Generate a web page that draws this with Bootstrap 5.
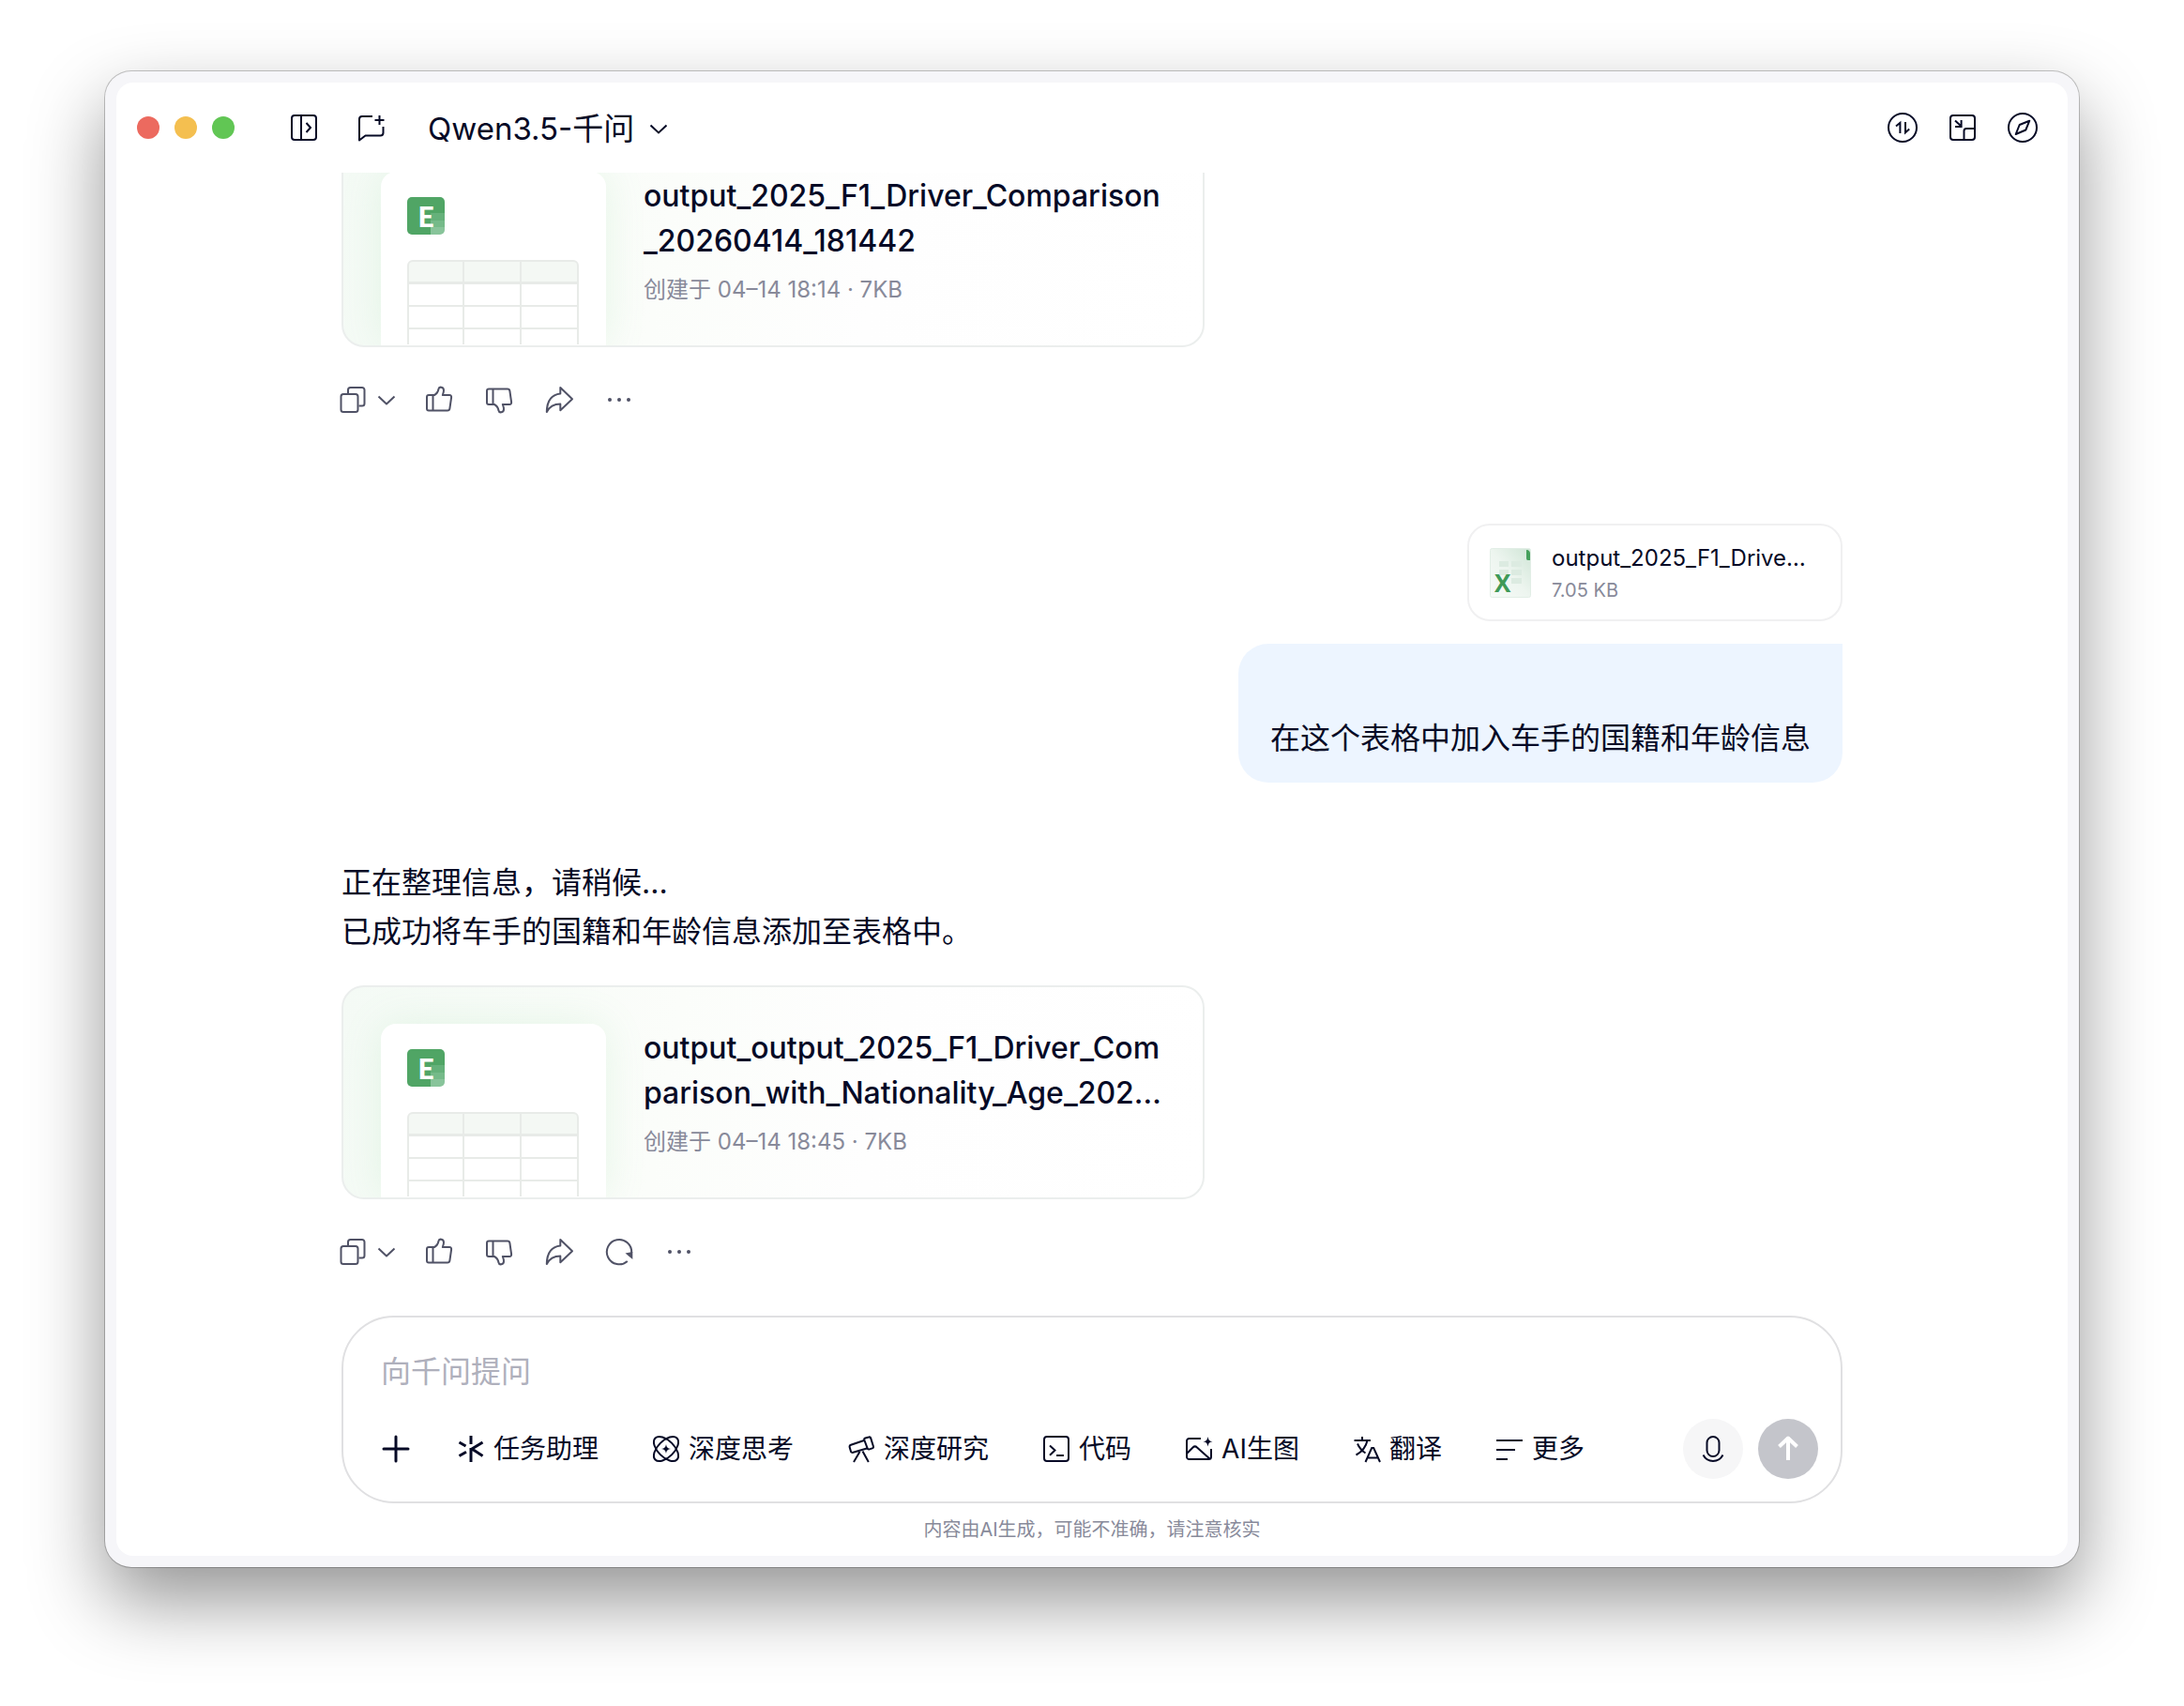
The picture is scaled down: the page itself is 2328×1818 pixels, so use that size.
<!DOCTYPE html>
<html lang="zh-CN">
<head>
<meta charset="utf-8">
<meta name="viewport" content="width=device-width, initial-scale=1">
<title>Qwen3.5-千问</title>
<link href="https://cdn.jsdelivr.net/npm/bootstrap@5.3.0/dist/css/bootstrap.min.css" rel="stylesheet">
<style>
:root{--ink:#060a26;--soft:#888a9a;--act:#505266}
body{font-family:Inter,"Noto Sans CJK SC",sans-serif;color:var(--ink);background:#fff;height:100vh;padding:76px 112px 148px;overflow:hidden}
svg{display:block;flex:none;fill:none;stroke:currentColor;stroke-width:2;overflow:visible}
.window{height:100%;padding:12px;background:#f6f6f9;border-radius:28px;box-shadow:0 0 0 1px rgba(0,0,0,.22),0 36px 80px rgba(0,0,0,.42)}
.pane{height:100%;background:#fff;border-radius:18px;overflow:hidden}
.topbar{height:96px;padding:0 32px 0 22px}
.light{width:24px;height:24px;border-radius:50%}
.light-close{background:#ec6a5f}
.light-min{background:#f4bf50}
.light-zoom{background:#61c654}
.icon-btn{background:none;border:0;padding:0;color:inherit;display:flex;align-items:center}
.nav-tools{gap:40px;margin:0 44px 0 58px}
.window-tools{gap:32px}
.model{font-size:33px;line-height:48px;padding-top:2px}
.column{width:100%;max-width:1600px;margin:0 auto}
.stream{min-height:0}
.filecard{width:920px;max-width:100%;height:228px;border:2px solid #ebeeed;border-radius:24px;overflow:hidden;background:linear-gradient(100deg,#f4faf5 0,#fbfdfa 38%,#fefefe 62%,#fff 100%)}
.sheet{width:240px;margin:39px 40px 0;padding:27px 0 0 28px;background:#fff;border-radius:16px 16px 0 0;box-shadow:0 0 44px rgba(110,205,125,.14)}
.elogo{width:40px;height:40px;border-radius:5px;background:#50a565 linear-gradient(#65b17a 0 33%,#75ba89 33% 66%,#88c49a 66%) right bottom/15px 23px no-repeat;color:#fff;font-family:Lato,sans-serif;font-size:30px;line-height:40px;font-weight:900;text-align:center}
.grid-art{margin:27px 0 0;stroke:#e8ebe8}
.ftitle{font-size:32px;line-height:48px;font-weight:500;padding-top:41px}
.fmeta{font-size:24px;line-height:40px;color:var(--soft);margin-top:8px}
.actions{color:var(--act);height:40px;margin:36px 0 0 -2px}
.actions svg{stroke-linejoin:round}
.copy-group{gap:12px;margin-right:32px}
.action-group{gap:36px}
.request{margin:112px 0 80px}
.attach{width:400px;height:104px;border:2px solid #f0f0f1;border-radius:24px;padding:2px 22px 0;gap:22px}
.aname{font-size:24px;line-height:36px}
.asize{font-size:20px;line-height:32px;color:var(--soft)}
.bubble{background:#edf5ff;border-radius:32px 0 32px 32px;padding:75px 34px 21px;margin-top:24px}
.say{font-size:32px;line-height:52px}
.reply{padding:1px 0 31px}
.composer{border:2px solid #e0e0e2;border-radius:56px;padding:34px 24px 24px 40px}
.ask{border:0;padding:0;height:48px;font-size:32px;line-height:48px;color:var(--ink);width:100%;display:block;background:none;outline:0}
.ask::placeholder{color:#afb0bc;opacity:1}
.tools{margin-top:26px;height:64px;padding-left:2px}
.plus{margin-right:52px}
.tool-list{gap:58px}
.tool{font-size:28px;line-height:40px;gap:10px;white-space:nowrap}
.bold-art{stroke-width:3}
.round{width:64px;height:64px;border-radius:50%;justify-content:center}
.mic{background:#f6f6f7}
.send{background:#c4c5cb}
.send svg{stroke-width:4}
.note{height:56px;line-height:56px;font-size:20px;color:var(--soft)}
</style>
<script src="https://cdn.jsdelivr.net/npm/bootstrap@5.3.0/dist/js/bootstrap.bundle.min.js"></script>
</head>
<body>
<svg width="0" height="0" class="position-absolute" aria-hidden="true">
  <defs>
    <linearGradient id="pageFill" x1="1" y1="0" x2="0" y2="1"><stop offset="0" stop-color="#cfe5d6"/><stop offset=".5" stop-color="#edf5ef"/><stop offset="1" stop-color="#f7fbf8"/></linearGradient>
    <symbol id="copy" viewBox="0 0 28 28" overflow="visible"><rect x="1.5" y="8" width="18" height="19" rx="2.5"/><path d="M9 7V3.500a2.500 2.500 0 0 1 2.500-2.500H24a2.500 2.500 0 0 1 2.500 2.500V18a2.500 2.500 0 0 1-2.500 2.500h-3.500"/></symbol>
    <symbol id="down" viewBox="0 0 20 20" overflow="visible"><path d="M1.500 6.500 10 14.500l8.500-8"/></symbol>
    <symbol id="thumb" viewBox="0 0 28 28" overflow="visible"><path d="M7.500 9h1.500c3-1.500 4-4 4.500-6.500.5-2.800 5.500-2.500 5.500 1.500 0 2-.6 3.500-1.200 5H25c1.500 0 2.300 1 2.100 2.500l-1.700 11.800c-.2 1.500-1 2.200-2.500 2.200H3a2 2 0 0 1-2-2V11a2 2 0 0 1 2-2zh-.5M7.500 9v16.500"/></symbol>
    <symbol id="share" viewBox="0 0 28 28" overflow="visible"><path d="M15.300 1v6.500C6 8.500 1 15 .8 27c3-6 7.500-8.500 14.500-8.500v6.800L28 13.300z"/></symbol>
    <symbol id="more" viewBox="0 0 28 28" overflow="visible"><g fill="currentColor" stroke="none"><circle cx="4" cy="14" r="2"/><circle cx="14" cy="14" r="2"/><circle cx="24" cy="14" r="2"/></g></symbol>
    <symbol id="redo" viewBox="0 0 28 28" overflow="visible"><path d="M22.800 24A13.200 13.200 0 1 1 27.200 15"/><path fill="currentColor" stroke="none" d="M20.500 15.500 28.300 14v8z"/></symbol>
    <symbol id="gridart" viewBox="0 0 184 90"><path d="M1 24V6a5 5 0 0 1 5-5h171a5 5 0 0 1 5 5v18z" fill="#f4f8f4"/><path d="M1 24v70M182 24v70M60 1v93M121 1v93M1 25h181M1 49h181M1 73h181"/></symbol>
  </defs>
</svg>
<div class="window">
 <div class="pane d-flex flex-column">
  <header class="topbar d-flex align-items-center flex-shrink-0">
    <div class="d-flex gap-3">
      <span class="light light-close"></span><span class="light light-min"></span><span class="light light-zoom"></span>
    </div>
    <div class="nav-tools d-flex">
      <button type="button" class="icon-btn" aria-label="侧边栏"><svg width="32" height="32" viewBox="0 0 32 32"><rect x="3" y="3" width="26" height="26" rx="3"/><path d="M13 3v26M18.500 11l4.500 5-4.500 5"/></svg></button>
      <button type="button" class="icon-btn" aria-label="新对话"><svg width="32" height="32" viewBox="0 0 32 32"><path stroke-linejoin="round" d="M17 4H6a3 3 0 0 0-3 3v22.500l6.500-5H25.500a3 3 0 0 0 3-3V15M24.500 3v10M19.500 8h10"/></svg></button>
    </div>
    <button type="button" class="icon-btn model">Qwen3.5-千问<svg class="ms-3" width="20" height="20"><use href="#down"/></svg></button>
    <div class="window-tools d-flex ms-auto">
      <button type="button" class="icon-btn" aria-label="传输"><svg width="32" height="32" viewBox="0 0 32 32"><circle cx="16" cy="16" r="15"/><path d="M9 14.500l4.400-3.700V22M23.200 17.500l-4.200 3.700V10"/></svg></button>
      <button type="button" class="icon-btn" aria-label="小窗"><svg width="32" height="32" viewBox="0 0 32 32"><rect x="3" y="3" width="26" height="26" rx="3"/><path d="M29 17h-9a2.500 2.500 0 0 0-2.500 2.500V29M8 8.500l6.500 6M14.600 8v7H8"/></svg></button>
      <button type="button" class="icon-btn" aria-label="发现"><svg width="32" height="32" viewBox="0 0 32 32"><circle cx="16" cy="16" r="15"/><path stroke-linejoin="round" d="M23.300 8.700 19.300 18.500 8.700 23l4-10z"/></svg></button>
    </div>
  </header>
  <main class="stream flex-grow-1 overflow-hidden d-flex flex-column justify-content-end">
   <div class="column flex-shrink-0 pb-5">
    <article>
      <div class="filecard d-flex">
        <div class="sheet flex-shrink-0"><div class="elogo">E</div><svg class="grid-art" width="184" height="90"><use href="#gridart"/></svg></div>
        <div><div class="ftitle">output_2025_F1_Driver_Comparison<br>_20260414_181442</div><div class="fmeta">创建于 04–14 18:14 · 7KB</div></div>
      </div>
      <div class="actions d-flex align-items-center">
        <div class="copy-group d-flex">
        <button type="button" class="icon-btn" aria-label="复制"><svg width="28" height="28"><use href="#copy"/></svg></button>
        <button type="button" class="icon-btn" aria-label="复制选项"><svg width="20" height="20"><use href="#down"/></svg></button>
        </div>
        <div class="action-group d-flex">
        <button type="button" class="icon-btn" aria-label="赞"><svg width="28" height="28"><use href="#thumb"/></svg></button>
        <button type="button" class="icon-btn" aria-label="踩"><svg width="28" height="28"><g transform="matrix(1 0 0 -1 0 28)"><use href="#thumb" width="28" height="28"/></g></svg></button>
        <button type="button" class="icon-btn" aria-label="分享"><svg width="28" height="28"><use href="#share"/></svg></button>
        <button type="button" class="icon-btn" aria-label="更多操作"><svg width="28" height="28"><use href="#more"/></svg></button>
        </div>
      </div>
    </article>
    <article class="request d-flex flex-column align-items-end">
      <div class="attach d-flex align-items-center">
        <svg width="44" height="54" viewBox="0 0 44 54"><rect x=".5" y=".5" width="43" height="52" rx="2" fill="url(#pageFill)" stroke="#e2eee6" stroke-width="1"/><path d="M39 2c3 0 4 2 4 4v7h-2.500c-1 0-1.500-1-1.500-2z" fill="#45a05c" stroke="none"/><path fill="#dcebe1" stroke="none" d="M10 14h10v6H10zM23 14h11v6H23zM10 23h10v6H10zM23 23h11v6H23zM23 32h11v6H23z"/><text x="5" y="47" font-family="Open Sans, sans-serif" font-weight="700" font-size="26" fill="#3f9a57" stroke="none">X</text></svg>
        <div><div class="aname">output_2025_F1_Drive…</div><div class="asize">7.05 KB</div></div>
      </div>
      <div class="bubble say">在这个表格中加入车手的国籍和年龄信息</div>
    </article>
    <article>
      <div class="say reply">正在整理信息，请稍候...<br>已成功将车手的国籍和年龄信息添加至表格中。</div>
      <div class="filecard d-flex">
        <div class="sheet flex-shrink-0"><div class="elogo">E</div><svg class="grid-art" width="184" height="90"><use href="#gridart"/></svg></div>
        <div><div class="ftitle">output_output_2025_F1_Driver_Com<br>parison_with_Nationality_Age_202…</div><div class="fmeta">创建于 04–14 18:45 · 7KB</div></div>
      </div>
      <div class="actions d-flex align-items-center">
        <div class="copy-group d-flex">
        <button type="button" class="icon-btn" aria-label="复制"><svg width="28" height="28"><use href="#copy"/></svg></button>
        <button type="button" class="icon-btn" aria-label="复制选项"><svg width="20" height="20"><use href="#down"/></svg></button>
        </div>
        <div class="action-group d-flex">
        <button type="button" class="icon-btn" aria-label="赞"><svg width="28" height="28"><use href="#thumb"/></svg></button>
        <button type="button" class="icon-btn" aria-label="踩"><svg width="28" height="28"><g transform="matrix(1 0 0 -1 0 28)"><use href="#thumb" width="28" height="28"/></g></svg></button>
        <button type="button" class="icon-btn" aria-label="分享"><svg width="28" height="28"><use href="#share"/></svg></button>
        <button type="button" class="icon-btn" aria-label="重新生成"><svg width="28" height="28"><use href="#redo"/></svg></button>
        <button type="button" class="icon-btn" aria-label="更多操作"><svg width="28" height="28"><use href="#more"/></svg></button>
        </div>
      </div>
    </article>
   </div>
  </main>
  <footer class="column flex-shrink-0">
    <form class="composer">
      <input class="ask" type="text" placeholder="向千问提问" aria-label="向千问提问">
      <div class="tools d-flex align-items-center">
        <button type="button" class="icon-btn plus" aria-label="添加"><svg class="bold-art" width="28" height="28" stroke-linecap="round"><path d="M14 1v26M1 14h26"/></svg></button>
        <div class="tool-list d-flex">
        <button type="button" class="icon-btn tool"><svg class="bold-art" width="28" height="28"><path d="M14 0v9M14 13v15M1.500 7l7 4M1.500 21.500l7.500-4.300M26.500 7 15 14l11.500 7.500"/></svg>任务助理</button>
        <button type="button" class="icon-btn tool"><svg width="28" height="28"><ellipse cx="14" cy="14" rx="16.300" ry="8.700" transform="rotate(45 14 14)"/><ellipse cx="14" cy="14" rx="16.300" ry="8.700" transform="rotate(-45 14 14)"/><path fill="currentColor" stroke="none" d="M14 9c.7 3.500 1.500 4.300 5 5-3.500.7-4.300 1.500-5 5-.7-3.500-1.500-4.300-5-5 3.500-.7 4.300-1.500 5-5z"/></svg>深度思考</button>
        <button type="button" class="icon-btn tool"><svg width="28" height="28"><path d="M17 5 3 9.800c-1.200.4-1.700 1.400-1.300 2.600l1.200 4c.3 1.200 1.300 1.700 2.500 1.400L20 13.500M17.300 4.500c-.3-1 .1-1.700 1-2l3.700-1c1-.3 1.900.1 2.200 1.100l2.700 8.600c.3 1-.1 1.800-1.100 2.200l-3 1c-1 .3-1.900-.1-2.200-1.100zM12.500 17 6 28M15.500 16.500 21.800 28"/></svg>深度研究</button>
        <button type="button" class="icon-btn tool"><svg width="28" height="28"><rect x="1" y="1" width="26" height="26" rx="3"/><path d="M7 10.500l5.500 5-5.500 5.300M14 21h8"/></svg>代码</button>
        <button type="button" class="icon-btn tool"><svg width="28" height="28"><path d="M16 3H3.500A2.500 2.500 0 0 0 1 5.500v17A2.500 2.500 0 0 0 3.500 25h21a2.500 2.500 0 0 0 2.500-2.500V14M1 19l6.500-6.500c1.500-1.500 3-1.500 4.500 0L26 25"/><path fill="currentColor" stroke="none" d="M23.500 1c.8 3.800 1.500 4.500 5 5.300-3.500.7-4.200 1.500-5 5.200-.8-3.700-1.500-4.500-5-5.200 3.500-.8 4.200-1.500 5-5.300z"/></svg>AI生图</button>
        <button type="button" class="icon-btn tool"><svg width="28" height="28"><path d="M.5 5h17.500M9 1v4M14.500 5C13 12 9 17 2.500 20.500M4 8.500C6 13 8.500 16 12.500 18.500M12.500 28 19.200 13h2L28 28M15 23.500h10.500"/></svg>翻译</button>
        <button type="button" class="icon-btn tool"><svg width="28" height="28"><path d="M0 5h28M0 15h20M0 25h12"/></svg>更多</button>
        </div>
        <div class="d-flex gap-3 ms-auto">
          <button type="button" class="icon-btn round mic" aria-label="语音输入"><svg width="28" height="28"><rect x="7.500" y="1" width="13" height="21" rx="6.500"/><path d="M3.500 20.500C8 29 20 29 24.500 20.500"/></svg></button>
          <button type="submit" class="icon-btn round send text-white" aria-label="发送"><svg width="28" height="28"><path stroke-linejoin="round" d="M14 2.500V26M4.500 11.500 14 2.500l9.500 9"/></svg></button>
        </div>
      </div>
    </form>
    <div class="note text-center">内容由AI生成，可能不准确，请注意核实</div>
  </footer>
 </div>
</div>
</body>
</html>
